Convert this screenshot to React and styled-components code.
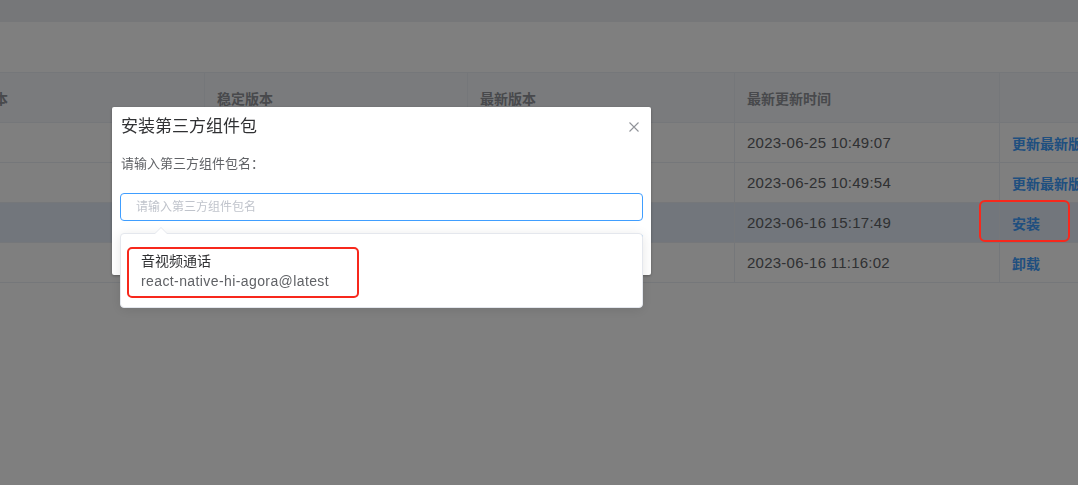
import React from "react";
import styled, { createGlobalStyle } from "styled-components";

const GlobalStyle = createGlobalStyle`
  html, body { margin: 0; padding: 0; background: #fff; }
  body {
    font-family: "Liberation Sans", "Noto Sans CJK SC", sans-serif;
    color: #606266;
  }
  * { box-sizing: border-box; }
`;

const Page = styled.div`
  width: 1078px;
  height: 485px;
  overflow: hidden;
  background: #fff;
`;

const TopStrip = styled.div`
  height: 22px;
  background: #eceef2;
`;

const Toolbar = styled.div`
  height: 50px;
  background: #fff;
`;

const TableViewport = styled.div`
  overflow: hidden;
`;

const Table = styled.div`
  margin-left: -60px;
  width: 1240px;
  border-top: 1px solid #ebeef5;
`;

const Row = styled.div`
  display: grid;
  grid-template-columns: 265px 263px 267px 265px 180px;
  height: ${(p) => (p.$header ? 50 : 40)}px;
  background: ${(p) => (p.$header ? "#f5f7fa" : p.$active ? "#e4edf8" : "#fff")};
  border-bottom: 1px solid #ebeef5;
`;

const Cell = styled.div`
  position: relative;
  display: flex;
  align-items: center;
  padding: 0 12px;
  border-right: 1px solid #ebeef5;
  white-space: nowrap;
  font-size: ${(p) => (p.$header ? 14 : 15)}px;
  font-weight: ${(p) => (p.$header ? 700 : 400)};
  color: ${(p) => (p.$header ? "#909399" : "#606266")};
  letter-spacing: ${(p) => (p.$header ? 0 : 0.25)}px;
`;

const ActionLink = styled.span`
  color: #409eff;
  font-weight: 700;
  font-size: 14px;
  letter-spacing: 0;
  cursor: pointer;
`;

const Annotation = styled.div`
  position: absolute;
  left: ${(p) => p.$left}px;
  top: ${(p) => p.$top}px;
  width: ${(p) => p.$w}px;
  height: ${(p) => p.$h}px;
  border: 2px solid #f7281c;
  border-radius: 6px;
  z-index: 2001;
  pointer-events: none;
`;

const Overlay = styled.div`
  position: fixed;
  inset: 0;
  background: rgba(0, 0, 0, 0.5);
  z-index: 2000;
  padding: 107px 0 0 112px;
`;

const Dialog = styled.div`
  width: 539px;
  background: #fff;
  border-radius: 2px;
  box-shadow: 0 1px 3px rgba(0, 0, 0, 0.3);
  display: flex;
  flex-direction: column;
`;

const DialogHeader = styled.div`
  display: flex;
  align-items: center;
  justify-content: space-between;
  height: 30px;
  padding: 10px 11px 0 9px;
`;

const Title = styled.span`
  font-size: 17px;
  line-height: 20px;
  color: #303133;
`;

const CloseButton = styled.button`
  border: none;
  background: none;
  padding: 0;
  width: 12px;
  height: 12px;
  display: flex;
  cursor: pointer;
`;

const DialogBody = styled.div`
  padding: 17px 8px 0 8px;
`;

const Label = styled.div`
  font-size: 13px;
  line-height: 20px;
  padding-left: 1px;
  color: #606266;
`;

const Field = styled.div`
  position: relative;
  margin-top: 19px;
`;

const Input = styled.input`
  display: block;
  width: 100%;
  height: 28px;
  border: 1px solid #409eff;
  border-radius: 4px;
  padding: 0 15px;
  font-family: "Liberation Sans", "Noto Sans CJK SC", sans-serif;
  font-size: 12px;
  color: #606266;
  outline: none;
  &::placeholder { color: #c0c4cc; }
`;

const Suggestions = styled.div`
  position: absolute;
  top: calc(100% + 12px);
  left: 0;
  right: 0;
  height: 75px;
  background: #fff;
  border: 1px solid #e4e7ed;
  border-radius: 4px;
  box-shadow: 0 2px 12px rgba(0, 0, 0, 0.1);
  padding: 13px 0 0 6px;
  z-index: 10;

  &::before, &::after {
    content: "";
    position: absolute;
    left: 34px;
    border: 6px solid transparent;
    border-top-width: 0;
  }
  &::before {
    top: -7px;
    border-bottom-color: #e4e7ed;
  }
  &::after {
    top: -6px;
    border-bottom-color: #fff;
  }
`;

const SuggestionItem = styled.div`
  width: 232px;
  height: 51px;
  border: 2px solid #f7281c;
  border-radius: 5px;
  padding: 2px 12px;
  cursor: pointer;
`;

const ItemName = styled.div`
  font-size: 14px;
  line-height: 20px;
  color: #303133;
`;

const ItemPackage = styled.div`
  font-size: 14px;
  line-height: 20px;
  letter-spacing: 0.4px;
  color: #606266;
`;

const DialogFooter = styled.div`
  height: 54px;
  display: flex;
  justify-content: flex-end;
  align-items: center;
  gap: 10px;
  padding: 0 8px;
`;

const Button = styled.button`
  height: 28px;
  padding: 0 15px;
  border-radius: 3px;
  font-size: 12px;
  border: 1px solid ${(p) => (p.$primary ? "#409eff" : "#dcdfe6")};
  background: ${(p) => (p.$primary ? "#409eff" : "#fff")};
  color: ${(p) => (p.$primary ? "#fff" : "#606266")};
`;

const rows = [
  { cur: "1.2.0", stable: "1.2.0", latest: "1.3.0", time: "2023-06-25 10:49:07", action: "更新最新版本" },
  { cur: "2.0.1", stable: "2.0.1", latest: "2.1.0", time: "2023-06-25 10:49:54", action: "更新最新版本" },
  { cur: "-", stable: "1.0.0", latest: "1.0.0", time: "2023-06-16 15:17:49", action: "安装", active: true, marked: true },
  { cur: "0.9.2", stable: "0.9.2", latest: "0.9.2", time: "2023-06-16 11:16:02", action: "卸载" },
];

function CloseIcon() {
  return (
    <svg width="12" height="12" viewBox="0 0 12 12">
      <path d="M1.5 1.5 L10.5 10.5 M10.5 1.5 L1.5 10.5" stroke="#909399" strokeWidth="1.1" fill="none" />
    </svg>
  );
}

export default function App() {
  return (
    <>
      <GlobalStyle />
      <Page>
        <TopStrip />
        <Toolbar />
        <TableViewport>
          <Table>
            <Row $header>
              <Cell $header>当前版本</Cell>
              <Cell $header>稳定版本</Cell>
              <Cell $header>最新版本</Cell>
              <Cell $header>最新更新时间</Cell>
              <Cell $header></Cell>
            </Row>
            {rows.map((r) => (
              <Row key={r.time} $active={r.active}>
                <Cell>{r.cur}</Cell>
                <Cell>{r.stable}</Cell>
                <Cell>{r.latest}</Cell>
                <Cell>{r.time}</Cell>
                <Cell>
                  <ActionLink>{r.action}</ActionLink>
                  {r.marked && <Annotation $left={-21} $top={-3} $w={91} $h={42} />}
                </Cell>
              </Row>
            ))}
          </Table>
        </TableViewport>
      </Page>
      <Overlay>
        <Dialog>
          <DialogHeader>
            <Title>安装第三方组件包</Title>
            <CloseButton aria-label="关闭">
              <CloseIcon />
            </CloseButton>
          </DialogHeader>
          <DialogBody>
            <Label>请输入第三方组件包名：</Label>
            <Field>
              <Input placeholder="请输入第三方组件包名" />
              <Suggestions>
                <SuggestionItem>
                  <ItemName>音视频通话</ItemName>
                  <ItemPackage>react-native-hi-agora@latest</ItemPackage>
                </SuggestionItem>
              </Suggestions>
            </Field>
          </DialogBody>
          <DialogFooter>
            <Button>取消</Button>
            <Button $primary>确定</Button>
          </DialogFooter>
        </Dialog>
      </Overlay>
    </>
  );
}
